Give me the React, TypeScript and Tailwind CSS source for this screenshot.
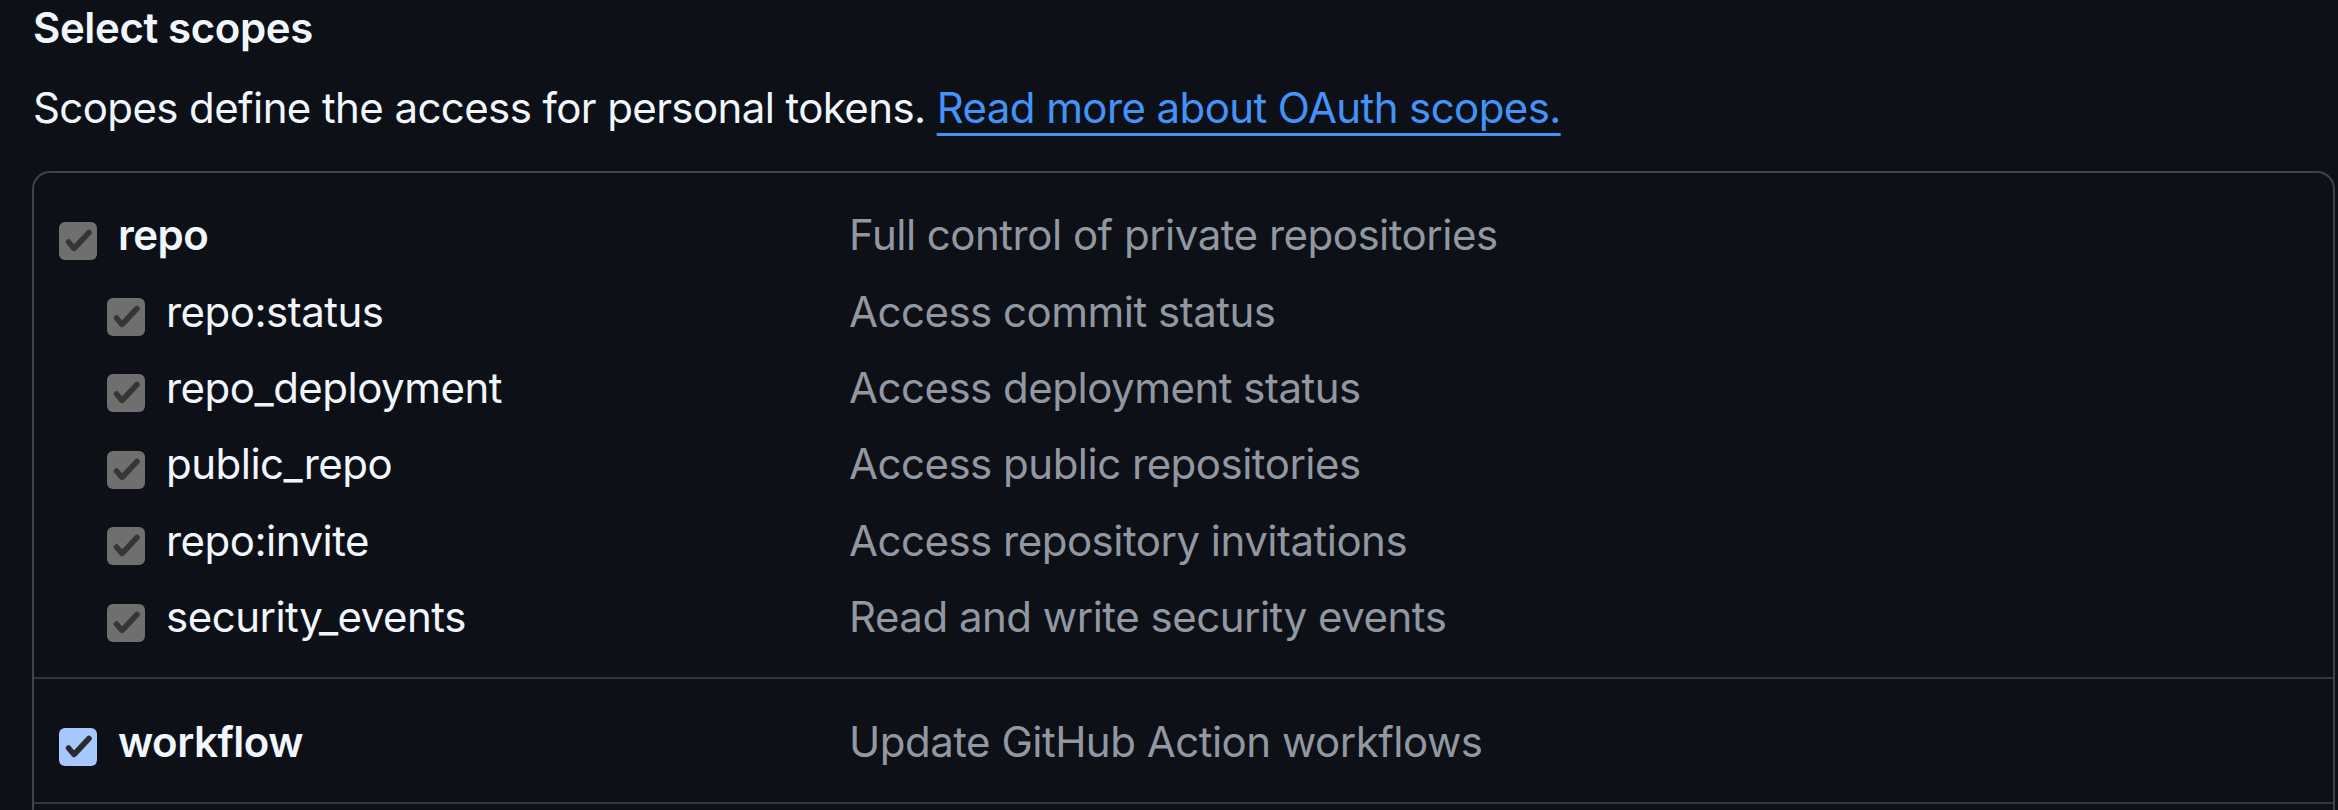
import React from "react";

type Scope = { name: string; desc: string; checked: "gray" | "blue"; sub?: boolean; bold?: boolean };

const groups: Scope[][] = [
  [
    { name: "repo", desc: "Full control of private repositories", checked: "gray", bold: true },
    { name: "repo:status", desc: "Access commit status", checked: "gray", sub: true },
    { name: "repo_deployment", desc: "Access deployment status", checked: "gray", sub: true },
    { name: "public_repo", desc: "Access public repositories", checked: "gray", sub: true },
    { name: "repo:invite", desc: "Access repository invitations", checked: "gray", sub: true },
    { name: "security_events", desc: "Read and write security events", checked: "gray", sub: true },
  ],
  [{ name: "workflow", desc: "Update GitHub Action workflows", checked: "blue", bold: true }],
];

function Checkbox({ kind }: { kind: "gray" | "blue" }) {
  const bg = kind === "blue" ? "bg-[#a6c8ff]" : "bg-[#6f6f6f]";
  return (
    <div className={`w-[38px] h-[38px] rounded-[6px] shrink-0 mt-[12px] ${bg}`}>
      <svg viewBox="0 0 38 38" width="38" height="38">
        <polyline
          points="9.5,20 15,26.5 30,10.5"
          fill="none"
          stroke={kind === "blue" ? "#2b2b2b" : "#363636"}
          strokeWidth="5.5"
          strokeLinecap="round"
          strokeLinejoin="round"
        />
      </svg>
    </div>
  );
}

export default function App() {
  return (
    <div
      className="w-[2338px] h-[810px] overflow-hidden bg-[#0d1117] pl-[32px] text-[#f0f6fc]"
      style={{ fontFamily: "Inter, 'Noto Sans', 'Liberation Sans', sans-serif" }}
    >
      <div className="mt-[2px] pl-[1px] text-[42px] leading-[52px] font-semibold tracking-[-0.4px]">Select scopes</div>
      <p className="mt-[22px] pl-[1px] text-[42px] leading-[63px] tracking-[-0.6px]">
        Scopes define the access for personal tokens.{" "}
        <a className="text-[#4493f8] underline decoration-[3px] underline-offset-[10px]">Read more about OAuth scopes.</a>
      </p>
      <div className="mt-[32px] w-[2303px] rounded-[18px] border-2 border-[#3d444d]">
        {groups.map((g, gi) => (
          <div key={gi} className={`py-[23px] pl-[25px] ${gi > 0 ? "border-t-2 border-[#30363d]" : ""}`}>
            {g.map((s) => (
              <div key={s.name} className="flex items-center h-[76.4px] pt-[1px]">
                <div className={`w-[790px] shrink-0 flex items-center ${s.sub ? "pl-[48px]" : ""}`}>
                  <Checkbox kind={s.checked} />
                  <span
                    className={`ml-[21px] text-[42px] leading-[63px] tracking-[-0.5px] ${s.bold ? "font-semibold" : ""}`}
                  >
                    {s.name}
                  </span>
                </div>
                <span className="text-[42px] leading-[63px] text-[#9198a1] tracking-[-0.5px]">{s.desc}</span>
              </div>
            ))}
          </div>
        ))}
        <div className="h-[120px] border-t-2 border-[#30363d]" />
      </div>
    </div>
  );
}
